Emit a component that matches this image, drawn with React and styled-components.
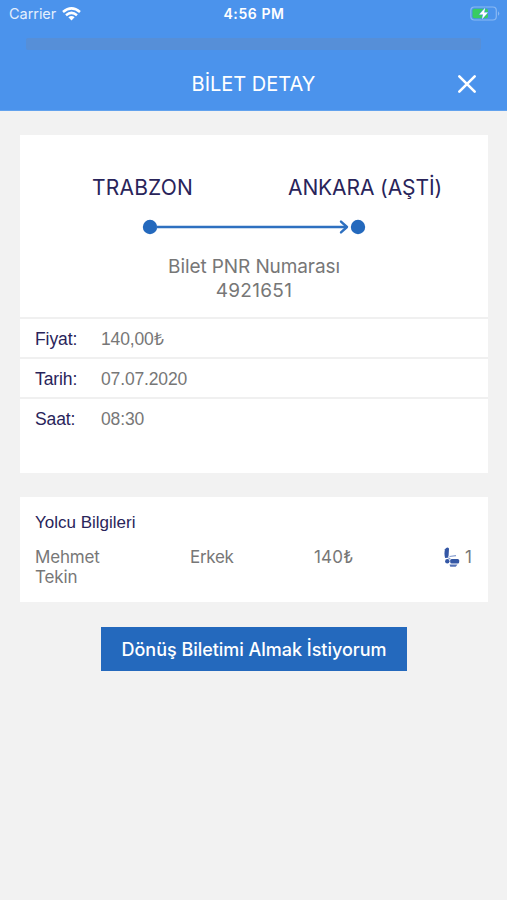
import React from "react";
import styled, { createGlobalStyle } from "styled-components";

const Global = createGlobalStyle`
  * { box-sizing: border-box; }
  body { margin: 0; background: #f2f2f2; }
`;

const Screen = styled.main`
  width: 507px;
  height: 900px;
  overflow: hidden;
  background: #f2f2f2;
  font-family: Inter, "Noto Sans", sans-serif;
  color: #777;
`;

const Header = styled.header`
  height: 111px;
  background: #4b93ec;
  border-bottom: 1px solid #62a2ee;
  color: #fff;
`;

const StatusBar = styled.div`
  height: 38px;
  padding: 0 7px 11px 9px;
  display: grid;
  grid-template-columns: 1fr auto 1fr;
  align-items: center;
`;

const Carrier = styled.div`
  display: flex;
  align-items: center;
  gap: 6px;
  font-size: 14.5px;
  letter-spacing: -0.05px;
  color: #e3effd;
`;

const Clock = styled.div`
  font-size: 14px;
  font-weight: 600;
  letter-spacing: 0.6px;
  margin-right: 1px;
`;

const BatteryIcon = styled.svg`
  justify-self: end;
`;

const Strip = styled.div`
  height: 12px;
  margin: 0 26px;
  background: #568fd8;
  border-radius: 2px;
`;

const TitleBar = styled.div`
  height: 60px;
  padding: 7px 30px 0;
  display: grid;
  grid-template-columns: 20px 1fr 20px;
  align-items: center;
`;

const Title = styled.h1`
  grid-column: 2;
  margin: 0;
  text-align: center;
  font-size: 20px;
  font-weight: 400;
  line-height: 24px;
`;

const CloseButton = styled.button`
  padding: 0;
  border: 0;
  background: none;
  display: flex;
`;

const Card = styled.section`
  width: 468px;
  height: ${(p) => p.$height}px;
  margin: 24px 0 0 20px;
  background: #fff;
`;

const Journey = styled.div`
  height: 182px;
  padding-top: 40px;
`;

const Cities = styled.div`
  display: flex;
  justify-content: space-between;
  padding: 0 46px 0 72px;
`;

const City = styled.div`
  font-size: 21px;
  line-height: 26px;
  color: #29245a;
  white-space: nowrap;
  letter-spacing: ${(p) => p.$track}px;
`;

const RouteLine = styled.svg`
  display: block;
  margin: 18px 0 0 122px;
`;

const Pnr = styled.div`
  margin-top: 20px;
  text-align: center;
  font-size: 19px;
  line-height: 24px;
`;

const PnrLine = styled.div`
  letter-spacing: ${(p) => p.$track}px;
`;

const DetailRow = styled.div`
  height: 40px;
  padding: 0 15px;
  border-top: 2px solid #f0f0f0;
  display: grid;
  grid-template-columns: 66px 1fr;
  align-items: baseline;
  line-height: 40px;
  font-family: "Liberation Sans", Arial, sans-serif;
  font-size: 17.5px;
`;

const Label = styled.span`
  color: #29245a;
  letter-spacing: -0.1px;
`;

const Value = styled.span`
  justify-self: start;
  letter-spacing: -0.15px;
`;

const SectionTitle = styled.h2`
  margin: 0;
  padding: 15px 15px 0;
  font-family: "Liberation Sans", Arial, sans-serif;
  font-size: 17px;
  font-weight: 400;
  line-height: 22px;
  color: #29245a;
`;

const Passenger = styled.div`
  display: grid;
  grid-template-columns: 155px 124px 1fr auto;
  padding: 13px 16px 0 15px;
  font-size: 17px;
  line-height: 20px;
`;

const Cell = styled.div`
  letter-spacing: ${(p) => p.$track || 0}px;
`;

const Name = styled(Cell)`
  width: 90px;
`;

const Seat = styled.div`
  display: flex;
  gap: 5px;
`;

const ReturnButton = styled.button`
  display: block;
  width: 306px;
  height: 44px;
  margin: 25px 0 0 101px;
  padding: 1px 0 0;
  border: 0;
  background: #2469bd;
  color: #fff;
  font: 500 18px/24px Inter, sans-serif;
  letter-spacing: -0.03px;
  white-space: nowrap;
`;

function Wifi() {
  return (
    <svg width="19" height="14" viewBox="0 0 19 14" fill="none" stroke="#fff" strokeWidth="2.5">
      <path d="M1 5Q9.5-2.3 18 5M4 8.2Q9.5 3.5 15 8.2" />
      <path d="M9.5 13.4 6.4 10.2Q9.5 7.8 12.6 10.2Z" fill="#fff" stroke="none" />
    </svg>
  );
}

function Battery() {
  return (
    <BatteryIcon width="30" height="15" viewBox="0 0 30 15">
      <rect x="0.8" y="1" width="25.5" height="13" rx="3.5" fill="none" stroke="#8ab9f3" strokeWidth="1.2" />
      <rect x="2.5" y="2.8" width="15.5" height="9.4" rx="1.8" fill="#38cc62" />
      <path d="M28 5.2Q30.6 7.5 28 9.8Z" fill="#8ab9f3" />
      <path d="M15.2 1.8 9.2 8.4h3.8l-1 4.8 5.9-6.7h-3.8z" fill="#fff" stroke="#4b93ec" strokeWidth="1" paintOrder="stroke" />
    </BatteryIcon>
  );
}

function Close() {
  return (
    <svg width="20" height="20" viewBox="0 0 20 20" fill="none" stroke="#fff" strokeWidth="2.6" strokeLinecap="round">
      <path d="M2.3 2.3 17.7 17.7M17.7 2.3 2.3 17.7" />
    </svg>
  );
}

function Route() {
  return (
    <RouteLine width="224" height="16" viewBox="0 0 224 16" fill="none">
      <circle cx="8" cy="8" r="7.2" fill="#2469bd" />
      <circle cx="216" cy="8" r="7.2" fill="#2469bd" />
      <path d="M14 8H204" stroke="#2e70c0" strokeWidth="2.4" />
      <path d="m199 2.6 6 5.4-6 5.4" stroke="#2e70c0" strokeWidth="2.4" strokeLinecap="round" strokeLinejoin="round" />
    </RouteLine>
  );
}

function SeatIcon() {
  return (
    <svg width="16" height="21" viewBox="0 0 16 21" fill="#3457a5">
      <path d="M1 2.2Q3.1-.7 5 1.4L4.6 8.7 3.8 10.8 1.1 11Q-.1 6.2 1 2.2Z" />
      <circle cx="3.3" cy="14.3" r="2.2" />
      <rect x="6.2" y="12" width="9" height="4.5" rx="1.5" />
      <path d="M5.5 17.5H13.5L11.7 19.8H6.3Z" fill="#5472b7" />
      <path d="M5.5 9.5 12 8.6M4.3 10.6 6.3 12.2" stroke="#839bce" strokeWidth="1.2" />
    </svg>
  );
}

const details = [
  { label: "Fiyat:", value: "140,00₺" },
  { label: "Tarih:", value: "07.07.2020" },
  { label: "Saat:", value: "08:30" },
];

export default function App() {
  return (
    <>
      <Global />
      <Screen>
        <Header>
          <StatusBar>
            <Carrier>Carrier <Wifi /></Carrier>
            <Clock>4:56 PM</Clock>
            <Battery />
          </StatusBar>
          <Strip />
          <TitleBar>
            <Title>BİLET DETAY</Title>
            <CloseButton aria-label="Kapat"><Close /></CloseButton>
          </TitleBar>
        </Header>
        <Card $height={338}>
          <Journey>
            <Cities>
              <City $track={0.2}>TRABZON</City>
              <City $track={-0.1}>ANKARA (AŞTİ)</City>
            </Cities>
            <Route />
            <Pnr>
              <PnrLine $track={-0.1}>Bilet PNR Numarası</PnrLine>
              <PnrLine $track={0.3}>4921651</PnrLine>
            </Pnr>
          </Journey>
          {details.map((d) => (
            <DetailRow key={d.label}>
              <Label>{d.label}</Label>
              <Value>{d.value}</Value>
            </DetailRow>
          ))}
        </Card>
        <Card $height={105}>
          <SectionTitle>Yolcu Bilgileri</SectionTitle>
          <Passenger>
            <Name $track={-0.15}>Mehmet Tekin</Name>
            <Cell $track={-0.3}>Erkek</Cell>
            <Cell $track={0.2}>140₺</Cell>
            <Seat><SeatIcon /><Cell>1</Cell></Seat>
          </Passenger>
        </Card>
        <ReturnButton>Dönüş Biletimi Almak İstiyorum</ReturnButton>
      </Screen>
    </>
  );
}
